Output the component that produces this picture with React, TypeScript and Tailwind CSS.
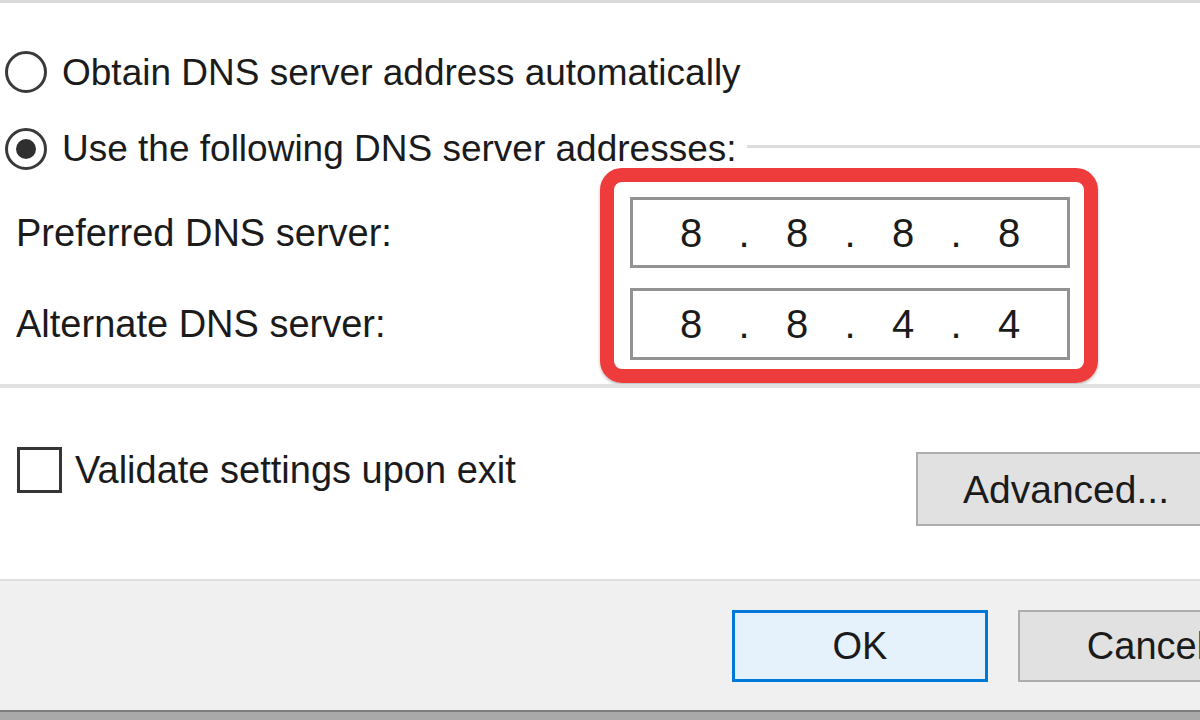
import React from "react";

const font = { fontFamily: '"Liberation Sans", Arial, sans-serif' };

function Radio({ checked }: { checked?: boolean }) {
  return (
    <div className="w-[42px] h-[42px] shrink-0 rounded-full border-[3px] border-[#3a3a3a] bg-white flex items-center justify-center">
      {checked && <div className="w-[20px] h-[20px] rounded-full bg-[#2f2f2f]" />}
    </div>
  );
}

function IpBox({ parts }: { parts: string[] }) {
  return (
    <div className="w-[440px] h-full border-[3px] border-[#939393] bg-white flex items-center pl-[23px] text-[40px] leading-none text-[#1b1b1b]">
      {parts.map((p, i) => (
        <React.Fragment key={i}>
          <span className="w-[70px] text-center">{p}</span>
          {i < 3 && <span className="w-[36px] text-center">.</span>}
        </React.Fragment>
      ))}
    </div>
  );
}

export default function App() {
  return (
    <div
      className="w-[1200px] h-[720px] bg-white overflow-hidden flex flex-col text-[#1b1b1b]"
      style={font}
    >
      <div className="h-[3px] bg-[#d9d9d9] shrink-0" />

      {/* radios */}
      <div className="mt-[48px] h-[42px] flex items-center pl-[5px] gap-[15px] shrink-0">
        <Radio />
        <span className="text-[37px] leading-none">Obtain DNS server address automatically</span>
      </div>
      <div className="mt-[36px] h-[39px] flex items-center pl-[5px] shrink-0">
        <Radio checked />
        <span className="ml-[15px] text-[37px] leading-none">Use the following DNS server addresses:</span>
        <div className="flex-1 ml-[10px] h-[3px] bg-[#dcdcdc] -mt-[4px]" />
      </div>

      {/* group content */}
      <div className="flex h-[215px] shrink-0">
        <div className="w-[600px] pl-[16px] pt-[29px] flex flex-col gap-[20px] text-[38px] leading-none">
          <div className="h-[71px] flex items-center">Preferred DNS server:</div>
          <div className="h-[72px] flex items-center">Alternate DNS server:</div>
        </div>
        <div className="w-[498px] h-[215px] border-[14px] border-[#ee3b3b] rounded-[22px] pl-[16px] pt-[15px] flex flex-col gap-[20px] shadow-[0_2px_3px_rgba(0,0,0,0.25)]">
          <div className="h-[71px]">
            <IpBox parts={["8", "8", "8", "8"]} />
          </div>
          <div className="h-[72px]">
            <IpBox parts={["8", "8", "4", "4"]} />
          </div>
        </div>
      </div>

      <div className="h-[4px] mt-[1px] bg-[#e2e2e2] shrink-0" />

      {/* validate + advanced */}
      <div className="flex-1 flex items-start justify-between pt-[59px]">
        <div className="flex items-center pl-[17px] gap-[13px]">
          <div className="w-[45px] h-[46px] border-[3px] border-[#353535] bg-white shrink-0" />
          <span className="text-[38px] leading-none">Validate settings upon exit</span>
        </div>
        <div className="mt-[5px] -mr-[16px] w-[300px] h-[74px] border-[2px] border-[#adadad] bg-[#e1e1e1] flex items-center justify-center text-[39px] leading-none">
          Advanced...
        </div>
      </div>

      {/* footer */}
      <div className="h-[131px] shrink-0 bg-[#f0f0f0] border-t-[2px] border-[#dfdfdf] flex justify-end items-start pt-[29px]">
        <div className="flex gap-[30px] -mr-[74px]">
          <div className="w-[256px] h-[72px] border-[3px] border-[#0078d7] bg-[#e5f1fb] flex items-center justify-center text-[38px] leading-none">
            OK
          </div>
          <div className="w-[256px] h-[72px] border-[2px] border-[#adadad] bg-[#e1e1e1] flex items-center justify-center text-[38px] leading-none">
            Cancel
          </div>
        </div>
      </div>
      <div className="h-[10px] shrink-0 bg-[#a9a9a9] border-t-[2px] border-[#7d7d7d]" />
    </div>
  );
}
